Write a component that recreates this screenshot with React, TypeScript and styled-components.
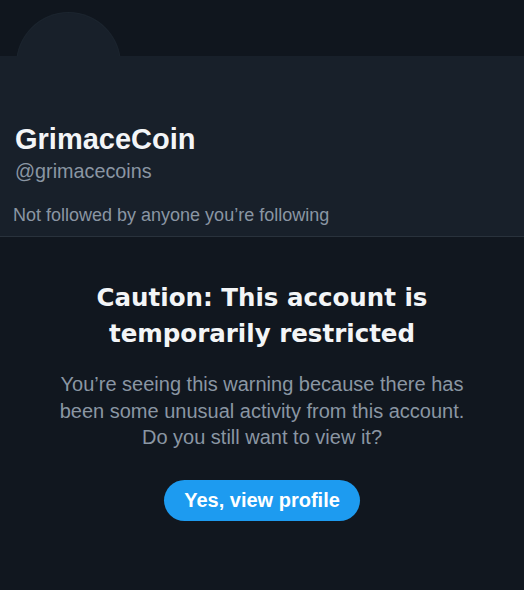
import React from "react";
import styled, { createGlobalStyle } from "styled-components";

const Global = createGlobalStyle`
  html, body { margin: 0; padding: 0; background: #11171f; }
  body { font-family: "Liberation Sans", Arial, sans-serif; -webkit-font-smoothing: antialiased; }
`;

const Page = styled.div`
  width: 524px;
  height: 590px;
  background: #11171f;
  display: flex;
  flex-direction: column;
  overflow: hidden;
`;

const Banner = styled.div`
  height: 56px;
  flex-shrink: 0;
  position: relative;
  background: #10161e;
`;

const Avatar = styled.div`
  position: absolute;
  left: 17px;
  top: 13px;
  width: 103px;
  height: 103px;
  border-radius: 50%;
  background: #18202a;
  box-shadow: 0 0 0 1px #1c252f;
`;

const Profile = styled.section`
  position: relative;
  z-index: 1;
  flex-shrink: 0;
  background: #18202a;
  border-bottom: 1px solid #29323c;
  padding: 66px 15px 0 15px;
  height: 181px;
  box-sizing: border-box;
  display: flex;
  flex-direction: column;
`;

const Name = styled.h1`
  margin: 0;
  font-size: 29px;
  font-weight: 700;
  color: #f3f5f7;
  line-height: 34px;
`;

const Handle = styled.div`
  margin-top: 3px;
  font-size: 19.8px;
  color: #8a96a3;
  line-height: 24px;
`;

const Followers = styled.div`
  margin-top: 21px;
  margin-left: -2px;
  font-size: 18px;
  color: #8a96a3;
  line-height: 22px;
`;

const Warning = styled.section`
  display: flex;
  flex-direction: column;
  align-items: center;
  padding-top: 43px;
  text-align: center;
`;

const Title = styled.h2`
  margin: 0;
  font-family: "DejaVu Sans", "Liberation Sans", sans-serif;
  font-size: 24.5px;
  font-weight: 700;
  color: #f3f5f7;
  line-height: 36px;
`;

const Body = styled.p`
  margin: 19px 0 0;
  font-size: 20px;
  line-height: 26.5px;
  color: #8a96a3;
`;

const Button = styled.button`
  margin-top: 29px;
  width: 196px;
  height: 41px;
  border: none;
  border-radius: 21px;
  background: #1d9bf0;
  color: #ffffff;
  font-family: "Liberation Sans", Arial, sans-serif;
  font-weight: 700;
  font-size: 20px;
  cursor: pointer;
`;

export default function App() {
  return (
    <Page>
      <Global />
      <Banner>
        <Avatar />
      </Banner>
      <Profile>
        <Name>GrimaceCoin</Name>
        <Handle>@grimacecoins</Handle>
        <Followers>Not followed by anyone you’re following</Followers>
      </Profile>
      <Warning>
        <Title>
          Caution: This account is
          <br />
          temporarily restricted
        </Title>
        <Body>
          You’re seeing this warning because there has
          <br />
          been some unusual activity from this account.
          <br />
          Do you still want to view it?
        </Body>
        <Button>Yes, view profile</Button>
      </Warning>
    </Page>
  );
}
